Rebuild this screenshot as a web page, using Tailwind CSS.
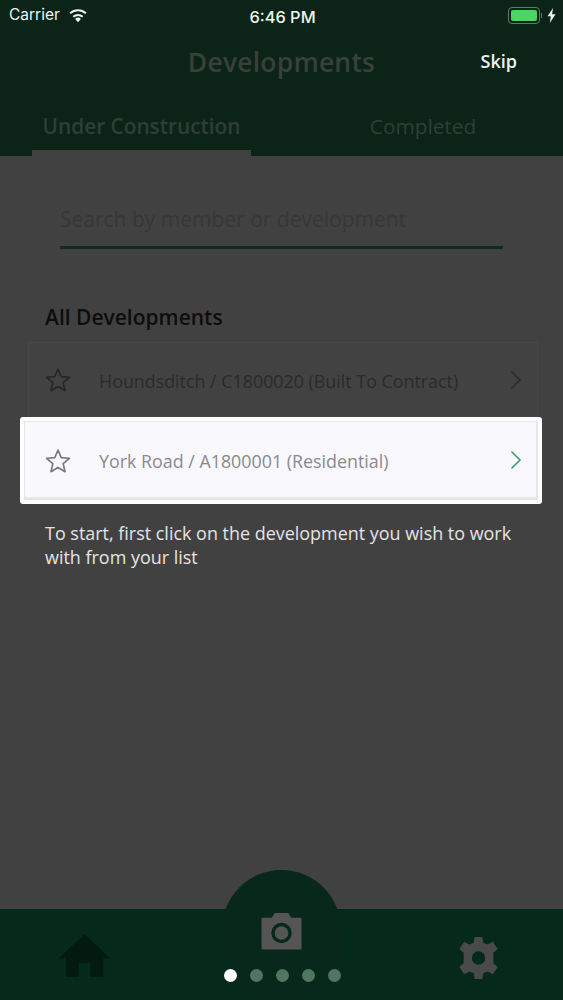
<!DOCTYPE html>
<html>
<head>
<meta charset="utf-8">
<script src="https://cdn.jsdelivr.net/npm/@tailwindcss/browser@4"></script>
</head>
<body class="m-0">
<div class="relative w-[563px] h-[1000px] overflow-hidden flex flex-col bg-[#424142] font-['Open_Sans',sans-serif]">
  <header class="h-[156px] shrink-0 bg-[#0b2417] flex flex-col">
    <div class="h-[30px] flex items-center pl-[9px] pr-[7px] relative font-['Inter',sans-serif] text-[#f1f5f1] text-[15.5px]">
      <span>Carrier</span>
      <svg class="ml-[8px]" width="20" height="15" viewBox="0 0 18 14"><path d="M9 13.2 L6.3 10.2 A4 4 0 0 1 11.7 10.2 Z" fill="#f1f5f1"/><path d="M4.6 8.2 A6.6 6.6 0 0 1 13.4 8.2" stroke="#f1f5f1" stroke-width="1.9" fill="none"/><path d="M1.6 5 A10.8 10.8 0 0 1 16.4 5" stroke="#f1f5f1" stroke-width="1.9" fill="none"/></svg>
      <span class="absolute left-0 right-0 pl-[2px] text-center top-[5px] text-[16.4px] font-medium">6:46 PM</span>
      <div class="ml-auto flex items-center">
        <div class="w-[32px] h-[17px] rounded-[4px] border border-[#5d7d62] p-[2px]"><div class="w-full h-full rounded-[2px] bg-[#4fd464]"></div></div>
        <div class="w-[1.5px] h-[5px] ml-[1px] bg-[#5d7d62]"></div>
        <svg class="ml-[5px]" width="9" height="15" viewBox="0 0 9 15"><path d="M6 0 L0.5 8.3 H3.8 L2.8 15 L8.5 6.2 H5.1 Z" fill="#f1f5f1"/></svg>
      </div>
    </div>
    <div class="h-[64px] flex items-center justify-center relative">
      <span class="pt-[2px] text-[26.5px] font-semibold text-[#37413a] tracking-[0.2px]">Developments</span>
      <span class="absolute right-[46px] top-[18px] text-[18px] font-semibold leading-[26px] text-[#eef3ee]">Skip</span>
    </div>
    <div class="flex-1 flex relative">
      <div class="w-[219px] ml-[32px] flex flex-col items-center">
        <span class="h-[56px] flex items-center pt-[10px] text-[20.8px] font-semibold text-[#2f3f35] whitespace-nowrap">Under Construction</span>
        <div class="w-full h-[6px] bg-[#424142]"></div>
      </div>
      <div class="flex-1 flex justify-center pl-[32px]">
        <span class="h-[56px] flex items-center pt-[10px] text-[20.8px] font-medium text-[#2f3f35]">Completed</span>
      </div>
    </div>
  </header>

  <main class="flex-1 flex flex-col">
    <div class="mt-[47px] ml-[60px] mr-[60px] h-[46px] border-b-[3px] border-[#0e2c20]">
      <span class="block pt-[2px] text-[21px] leading-[28px] text-[#373737] whitespace-nowrap">Search by member or development</span>
    </div>
    <h2 class="ml-[45px] mt-[54px] text-[21px] leading-[28px] font-semibold text-[#0d0d0d]">All Developments</h2>
    <div class="ml-[28px] mr-[25px] mt-[11px] h-[75px] border border-[#484748] bg-[#434243] flex items-center pl-[16px] pr-[15px]">
      <svg width="26" height="25" viewBox="0 0 26 25"><path d="M13 2 L16.2 9.6 L24.4 10.3 L18.2 15.7 L20 23.7 L13 19.5 L6 23.7 L7.8 15.7 L1.6 10.3 L9.8 9.6 Z" fill="none" stroke="#262626" stroke-width="1.6" stroke-linejoin="round"/></svg>
      <span class="ml-[28px] pt-[3px] text-[17.85px] text-[#2a2a2a] whitespace-nowrap">Houndsditch / C1800020 (Built To Contract)</span>
      <svg class="ml-auto" width="12" height="20" viewBox="0 0 12 20"><path d="M1.5 1.5 L10 10 L1.5 18.5" fill="none" stroke="#2b2b2b" stroke-width="1.6"/></svg>
    </div>
    <div class="ml-[20px] mr-[21px] h-[87px] bg-white rounded-[3px] p-[4px]">
      <div class="h-full bg-[#f9f8fd] border border-[#e6e5ea] border-b-[3px] border-r-[2px] flex items-center pl-[20px] pr-[14px] pt-[1px]">
        <svg width="26" height="25" viewBox="0 0 26 25"><path d="M13 2 L16.2 9.6 L24.4 10.3 L18.2 15.7 L20 23.7 L13 19.5 L6 23.7 L7.8 15.7 L1.6 10.3 L9.8 9.6 Z" fill="none" stroke="#77767b" stroke-width="1.6" stroke-linejoin="round"/></svg>
        <span class="ml-[28px] pt-[3px] text-[17.85px] text-[#8a898e] whitespace-nowrap">York Road / A1800001 (Residential)</span>
        <svg class="ml-auto" width="12" height="20" viewBox="0 0 12 20"><path d="M1.5 1.5 L10 10 L1.5 18.5" fill="none" stroke="#3f9c6c" stroke-width="1.6"/></svg>
      </div>
    </div>
    <p class="ml-[45px] mr-[40px] mt-[17px] text-[17.95px] leading-[24px] text-[#e4e4e4]">To start, first click on the development you wish to work with from your list</p>
  </main>

  <footer class="h-[91px] shrink-0 bg-[#05291a] flex items-start justify-between relative pl-[58px] pr-[63px]">
    <svg class="mt-[24px]" width="53" height="45" viewBox="0 0 54 48" preserveAspectRatio="none"><path d="M27 1 L53 27 H46 V47 H33 V32 H21 V47 H8 V27 H1 Z" fill="#021a0f"/></svg>
    <svg class="mt-[27px]" width="43" height="44" viewBox="0 0 44 46"><path fill="#4a4a4a" fill-rule="evenodd" d="M18 1 H26 L27 7 L31.5 9 L37 6 L42 13.5 L37.5 17.5 V28.5 L42 32.5 L37 40 L31.5 37 L27 39 L26 45 H18 L17 39 L12.5 37 L7 40 L2 32.5 L6.5 28.5 V17.5 L2 13.5 L7 6 L12.5 9 L17 7 Z M22 16 A7 7 0 1 0 22 30 A7 7 0 1 0 22 16 Z"/></svg>
    <div class="absolute left-[222px] top-[-39px] w-[119px] h-[134px] rounded-[60px] bg-[#07281a] flex justify-center pt-[42px]">
      <svg width="43" height="38" viewBox="0 0 42 39"><path fill="#555555" fill-rule="evenodd" d="M1.5 6 H11 L14 1 H28 L31 6 H40.5 A1 1 0 0 1 41.5 7 V37.5 A1 1 0 0 1 40.5 38.5 H1.5 A1 1 0 0 1 .5 37.5 V7 A1 1 0 0 1 1.5 6 Z M21 11 A10.5 10.5 0 1 0 21 32 A10.5 10.5 0 1 0 21 11 Z"/><circle cx="21" cy="21.5" r="7" fill="#555555"/></svg>
    </div>
    <div class="absolute left-[224px] top-[60px] flex gap-[13px]">
      <span class="w-[13px] h-[13px] rounded-full bg-white"></span>
      <span class="w-[13px] h-[13px] rounded-full bg-[#4f7661]"></span>
      <span class="w-[13px] h-[13px] rounded-full bg-[#4f7661]"></span>
      <span class="w-[13px] h-[13px] rounded-full bg-[#4f7661]"></span>
      <span class="w-[13px] h-[13px] rounded-full bg-[#4f7661]"></span>
    </div>
  </footer>
</div>
</body>
</html>
